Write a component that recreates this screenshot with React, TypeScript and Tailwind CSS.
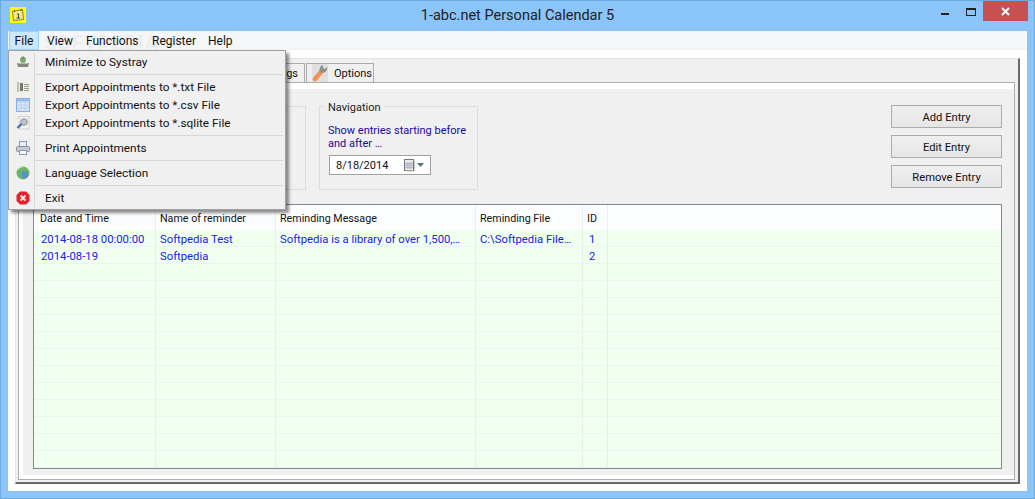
const font = { fontFamily: 'Roboto, "Open Sans", sans-serif' };

const menuItems = [
  { label: "File", cls: "w-[30px] justify-center border border-[#99d1ff] bg-[#cce8ff]" },
  { label: "View", cls: "w-[39px] pl-[8px]" },
  { label: "Functions", cls: "w-[66px] pl-[8px]" },
  { label: "Register", cls: "w-[56px] pl-[8px]" },
  { label: "Help", cls: "w-[40px] pl-[8px]" },
];
const columns = ["Date and Time", "Name of reminder", "Reminding Message", "Reminding File", "ID", ""];
const rows = [
  ["2014-08-18 00:00:00", "Softpedia Test", "Softpedia is a library of over 1,500,…", "C:\\Softpedia File…", "1", ""],
  ["2014-08-19", "Softpedia", "", "", "2", ""],
  ...Array.from({ length: 12 }, () => ["", "", "", "", "", ""]),
];
const gridCols = "grid grid-cols-[122px_120px_200px_107px_25px_1fr]";

function AppIcon() {
  return (
    <svg width="16" height="16" viewBox="0 0 16 16" className="bg-[#ffff00]">
      <path d="M2.5 4.5 L12.5 2.5 L13.5 12.5 L3.5 13.5 Z" fill="#f3e98a" stroke="#8a8230" />
      <path d="M4.5 3v2M11 2v2" stroke="#555" />
      <path d="M7 7h1.5v4M6.5 11h3.5" stroke="#444" fill="none" />
    </svg>
  );
}

function TrayIcon() {
  return (
    <svg width="14" height="14" viewBox="0 0 14 14">
      <path d="M1 8h12l-1 4H2Z" fill="#85887f" />
      <path d="M2 8h10v1H2Z" fill="#b8bab3" />
      <circle cx="7" cy="5" r="3" fill="#86a878" />
      <path d="M7 1l3 3H4Z" fill="#6a9c58" />
    </svg>
  );
}

function TxtIcon() {
  return (
    <svg width="14" height="14" viewBox="0 0 14 14">
      <rect x="1" y="1" width="12" height="12" fill="#f0efe4" />
      <rect x="1" y="2" width="2" height="10" fill="#b9c6a6" />
      <rect x="4" y="3" width="3" height="8" fill="#77776f" />
      <path d="M8 4.500h5M8 6.500h5M8 8.500h5M8 10.500h5" stroke="#9a9a92" />
    </svg>
  );
}

function CsvIcon() {
  return (
    <svg width="14" height="14" viewBox="0 0 14 14">
      <rect x="0.500" y="0.500" width="13" height="13" fill="#d3e3f6" stroke="#8fb0dc" />
      <rect x="1" y="1" width="12" height="2.500" fill="#9cbce6" />
      <path d="M5 4v9M9 4v9M1 7h12M1 10h12" stroke="#bdd2ec" />
    </svg>
  );
}

function SqliteIcon() {
  return (
    <svg width="14" height="14" viewBox="0 0 14 14">
      <rect x="3" y="0.500" width="10" height="12.500" fill="#f4f4f4" stroke="#cfcfcf" />
      <circle cx="8" cy="6" r="3.300" fill="#b9c4d0" stroke="#8a94a2" />
      <path d="M5.500 8L1.500 12" stroke="#3f6fb5" strokeWidth="2.400" />
    </svg>
  );
}

function PrintIcon() {
  return (
    <svg width="14" height="14" viewBox="0 0 14 14">
      <rect x="3.500" y="0.500" width="7" height="5" fill="#e6eef6" stroke="#8c9bad" />
      <rect x="0.500" y="5.500" width="13" height="5" rx="1" fill="#c3ccd6" stroke="#8793a0" />
      <rect x="3.500" y="9.500" width="7" height="4" fill="#f5f7f9" stroke="#8c9bad" />
    </svg>
  );
}

function GlobeIcon() {
  return (
    <svg width="14" height="14" viewBox="0 0 14 14">
      <circle cx="7" cy="7" r="6.500" fill="#6cb36f" />
      <path d="M6 6c2-2 5-1 6 1s0 4-2 5-4 0-4-2-1-2 0-4Z" fill="#5a90c4" />
      <path d="M2 4c1-2 3-3 5-3" stroke="#bfe3b0" fill="none" />
    </svg>
  );
}

function ExitIcon() {
  return (
    <svg width="14" height="14" viewBox="0 0 14 14">
      <path d="M4 0.500h6L13.500 4v6L10 13.500H4L0.500 10V4Z" fill="#e8202a" />
      <path d="M4.500 4.500l5 5M9.500 4.500l-5 5" stroke="#fde4e4" strokeWidth="2" />
    </svg>
  );
}

function WrenchIcon() {
  return (
    <svg width="16" height="18" viewBox="0 0 16 18" className="bg-[#e0e0e0]">
      <path d="M3 15L9 8" stroke="#f58f52" strokeWidth="4.500" strokeLinecap="round" />
      <path d="M8 8c-1-3 0-6 3-7v3l2 1 2-2c1 3-2 6-5 6Z" fill="#8f8f8f" />
    </svg>
  );
}

function CalendarIcon() {
  return (
    <svg width="12" height="13" viewBox="0 0 12 13">
      <rect x="1.500" y="0.500" width="9" height="11" fill="#ececec" stroke="#777" />
      <path d="M4 3v7M6 3v7M8 3v7M2 4.500h8M2 6.500h8M2 8.500h8" stroke="#b0b8c4" />
      <path d="M11.500 2v10H3" stroke="#c4c4c4" fill="none" />
    </svg>
  );
}

function MenuRow({ icon, label }: { icon: React.ReactNode; label: string }) {
  return (
    <div className="flex h-[18px] items-center">
      <div className="flex w-[26px] shrink-0 justify-center pl-[1px]">{icon}</div>
      <span className="pl-[10px] pt-[1px]">{label}</span>
    </div>
  );
}

function MenuSep() {
  return (
    <div className="flex h-[7px] items-center pl-[26px] pr-[2px]">
      <div className="h-px w-full bg-[#d7d7d7]" />
    </div>
  );
}

function ActionButton({ label }: { label: string }) {
  return (
    <button className="h-[23px] w-[111px] border border-[#acacac] bg-gradient-to-b from-[#f0f0f0] to-[#e5e5e5] pt-[3px] text-[11.2px] text-[#111]">
      {label}
    </button>
  );
}

export default function App() {
  return (
    <div style={font} className="relative h-[499px] w-[1035px] overflow-hidden border border-[#6fa8dc] bg-[#8ac4f9] text-[12px] text-[#111]">
      {/* title bar */}
      <div className="flex h-[30px] items-start">
        <div className="w-[300px] pl-[9px] pt-[6px]">
          <AppIcon />
        </div>
        <div className="flex-1 pt-[4px] text-center text-[14.5px] leading-[22px] text-[#222]">
          1-abc.net Personal Calendar 5
        </div>
        <div className="flex w-[300px] items-start justify-end pr-[6px]">
          <div className="mr-[17px] mt-[12px] h-[2px] w-[8px] bg-[#222]" />
          <div className="mr-[7px] mt-[7px] h-[8px] w-[10px] border border-t-2 border-[#222]" />
          <div className="flex h-[20px] w-[45px] items-center justify-center bg-[#c75050]">
            <svg width="9" height="9" viewBox="0 0 9 9">
              <path d="M1 1l7 7M8 1l-7 7" stroke="#fff" strokeWidth="2" />
            </svg>
          </div>
        </div>
      </div>

      {/* client area */}
      <div className="mx-[7px] h-[460px] bg-white">
        <div className="relative flex h-[19px] items-center border-b border-[#f0f0f0] bg-[#f5f6f7]">
          <div className="pointer-events-none absolute left-[36px] top-[-3px] text-[20px] font-bold tracking-[1px] text-[#ecedee]">
            SOFTPEDIA
          </div>
          <div className="relative flex pl-[1px]">
            {menuItems.map((m) => (
              <div key={m.label} className={`flex h-[19px] items-center pt-[1px] ${m.cls}`}>
                {m.label}
              </div>
            ))}
          </div>
        </div>

        {/* raised frame */}
        <div className="mx-[7px] mt-[8px] flex h-[426px] flex-col border-b-2 border-l border-r-2 border-t border-b-[#696969] border-l-[#e3e3e3] border-r-[#696969] border-t-[#e3e3e3] bg-[#f0f0f0] pb-[2px] pl-[2px] pr-[3px] text-[11px]">
          {/* tabs */}
          <div className="flex h-[23px] items-end pl-[197px]">
            <div className="flex h-[19px] w-[90px] items-center justify-end border border-b-0 border-[#acacac] pr-[6px] pt-[2px]">
              Settings
            </div>
            <div className="ml-[1px] flex h-[19px] w-[68px] items-center border border-b-0 border-[#acacac] pl-[5px]">
              <WrenchIcon />
              <span className="pl-[6px] pt-[2px]">Options</span>
            </div>
          </div>

          {/* tab page */}
          <div className="flex-1 border border-[#acacac] bg-white pb-[4px] pl-[4px] pt-[6px]">
            <div className="flex h-full flex-col bg-[#f0f0f0] pb-[6px] pl-[10px] pr-[12px]">
              <div className="flex h-[115px] shrink-0 pt-[17px]">
                <div className="h-[84px] w-[273px] border border-[#dcdcdc]" />
                <div className="relative ml-[13px] h-[84px] w-[159px] border border-[#dcdcdc] pl-[8px] pt-[17px] text-[#1a0a9c]">
                  <div className="absolute left-[5px] top-[-7px] bg-[#f0f0f0] px-[3px] leading-[16px] text-[#222]">
                    Navigation
                  </div>
                  <div className="whitespace-nowrap leading-[13px]">
                    Show entries starting before
                    <br />
                    and after …
                  </div>
                  <div className="ml-[1px] mt-[5px] flex h-[20px] w-[102px] items-center border border-[#a0a0a0] bg-white pl-[6px] text-[#111]">
                    <span className="w-[67px] pt-[2px]">8/18/2014</span>
                    <CalendarIcon />
                    <svg width="7" height="4" viewBox="0 0 7 4" className="ml-[2px]">
                      <path d="M0 0h7L3.500 4Z" fill="#5a6c8c" />
                    </svg>
                  </div>
                </div>
                <div className="ml-auto mt-[-1px] flex flex-col gap-[7px]">
                  <ActionButton label="Add Entry" />
                  <ActionButton label="Edit Entry" />
                  <ActionButton label="Remove Entry" />
                </div>
              </div>

              {/* list */}
              <div className="h-[265px] shrink-0 border border-[#808890] bg-[#f0fff0]">
                <div className={`${gridCols} h-[25px] bg-[#fcfdfe] text-[10.7px]`}>
                  {columns.map((c, i) => (
                    <div key={i} className={`flex items-center border-r border-[#e5eefb] pt-[3px] ${i === 0 ? "pl-[6px]" : "pl-[4px]"} ${i === 5 ? "border-r-0" : ""}`}>
                      {c}
                    </div>
                  ))}
                </div>
                {rows.map((r, ri) => (
                  <div key={ri} className={`${gridCols} h-[17px] border-b border-[#edf3ed] text-[11.3px] text-[#2020ee]`}>
                    {r.map((c, i) => (
                      <div key={i} className={`flex items-center whitespace-nowrap border-[#e4f2e4] pt-[2px] ${i === 0 ? "pl-[7px]" : i === 4 ? "pl-[6px]" : "pl-[4px]"} ${i === 5 ? "" : "border-r"}`}>
                        {c}
                      </div>
                    ))}
                  </div>
                ))}
              </div>
            </div>
          </div>
        </div>
      </div>

      {/* open File menu */}
      <div className="absolute left-[7px] top-[49px] h-[160px] w-[278px] border border-[#a0a0a0] bg-[#f0f0f0] pt-[2px] text-[11.8px] shadow-[3px_3px_3px_rgba(0,0,0,0.45)]">
        <div className="absolute bottom-[2px] left-[25px] top-[2px] w-px bg-[#d7d7d7]" />
        <MenuRow icon={<TrayIcon />} label="Minimize to Systray" />
        <MenuSep />
        <MenuRow icon={<TxtIcon />} label="Export Appointments to *.txt File" />
        <MenuRow icon={<CsvIcon />} label="Export Appointments to *.csv File" />
        <MenuRow icon={<SqliteIcon />} label="Export Appointments to *.sqlite File" />
        <MenuSep />
        <MenuRow icon={<PrintIcon />} label="Print Appointments" />
        <MenuSep />
        <MenuRow icon={<GlobeIcon />} label="Language Selection" />
        <MenuSep />
        <MenuRow icon={<ExitIcon />} label="Exit" />
      </div>
    </div>
  );
}
